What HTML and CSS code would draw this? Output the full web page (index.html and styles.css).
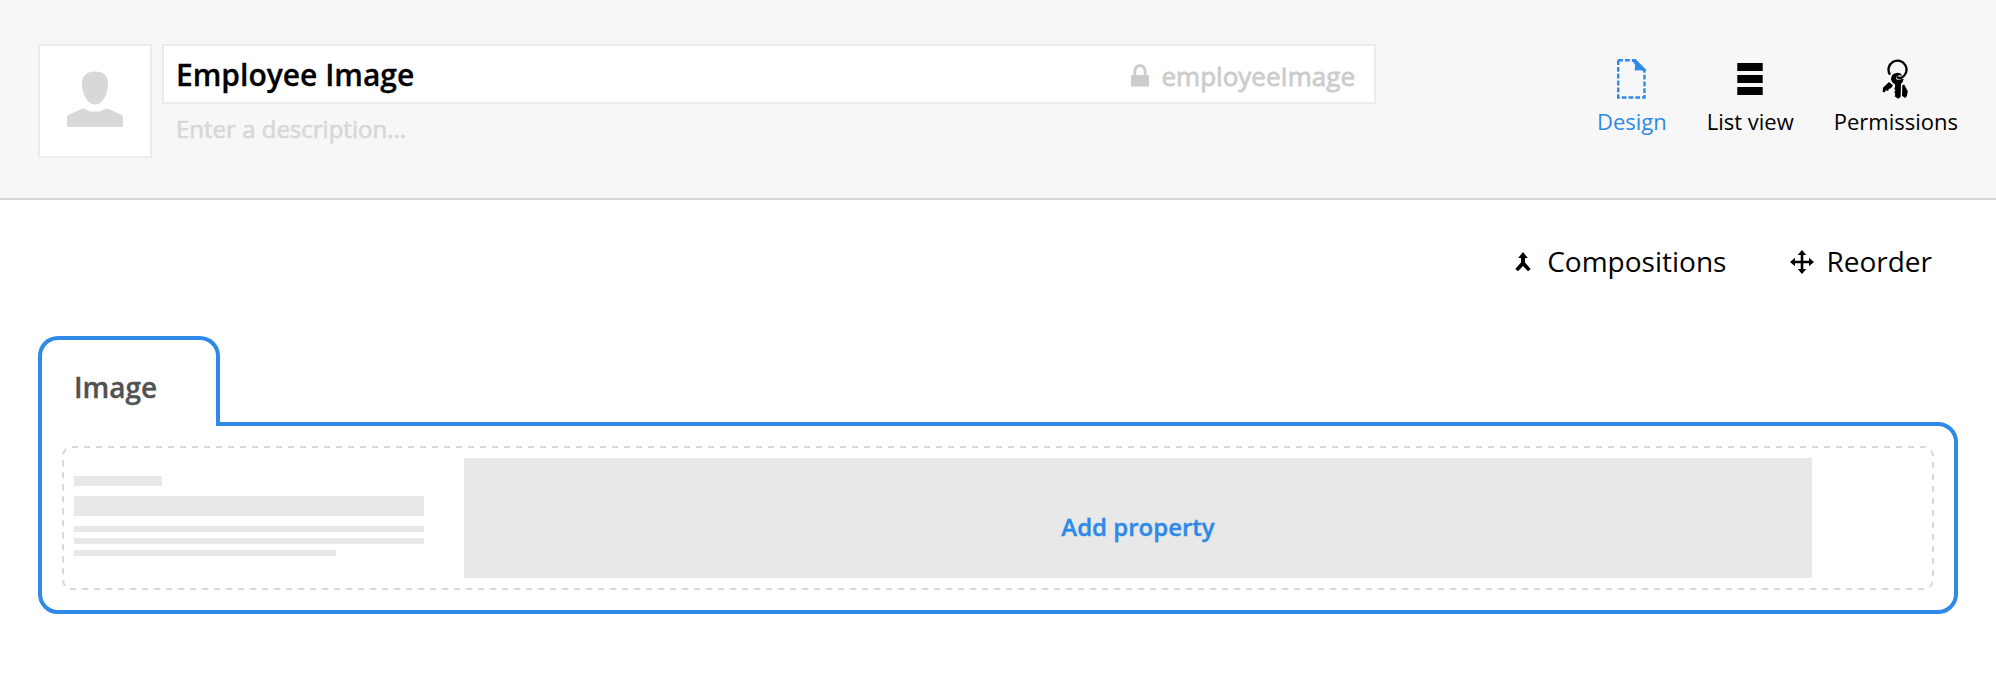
FILE: index.html
```html
<!DOCTYPE html>
<html lang="en">
<head>
<meta charset="utf-8">
<title>Employee Image</title>
<link rel="stylesheet" href="styles.css">
</head>
<body>
<header class="header">
  <div class="avatar">
    <svg width="56" height="56" viewBox="0 0 56 56"><path d="M28 0.500C36 0.500 41 4 41 13C41 22 36 33.500 28 33.500S15 22 15 13C15 4 20 0.500 28 0.500Z"/><path d="M16.500 37.500Q17.500 37.500 23 40.500H33Q38.500 37.500 39.500 37.500Q41 37.500 54 43.500Q56 44.500 56 46V54Q56 56 54 56H2Q0 56 0 54V46Q0 44.500 2 43.500Q15 37.500 16.500 37.500Z"/></svg>
  </div>
  <div class="fields">
    <div class="name-box">
      <span class="name">Employee Image</span>
      <span class="alias">
        <svg width="18" height="23" viewBox="0 0 18 23"><path d="M0 11H2.500V7C2.500 -2 15.500 -2 15.500 7V11H18V22.500H0ZM5.300 11H12.700V7.500C12.700 1.500 5.300 1.500 5.300 7.500Z" fill-rule="evenodd"/></svg>
        <span class="alias-text">employeeImage</span>
      </span>
    </div>
    <div class="description">Enter a description...</div>
  </div>
  <nav class="nav">
    <a class="nav-item active">
      <svg width="29" height="40" viewBox="0 0 29 40"><path d="M1.200 1.200H19M1.200 1.200V38.500H27.500V12" fill="none" stroke="currentColor" stroke-width="2.400" stroke-dasharray="4.800 2"/><path d="M15 0H18.500L29 10.500V12.500H27Q25 10.500 17.500 11.500Q19.500 4.500 15 2.300Z" fill="currentColor"/></svg>
      <span>Design</span>
    </a>
    <a class="nav-item">
      <svg width="26" height="40" viewBox="0 0 26 40"><path d="M0.300 4H25.700V12H0.300ZM0.300 16H25.700V24H0.300ZM0.300 28H25.700V36H0.300Z"/></svg>
      <span>List view</span>
    </a>
    <a class="nav-item">
      <svg width="28" height="40" viewBox="187 57 84 120"><path d="M211 104A27 27 0 1 1 246 113Q238 115 231 111" fill="none" stroke="#000" stroke-width="7"/><path d="M233 98Q243 98 248 107Q238 103 231 109Q226 116 232 119Q240 119 252 116Q251 126 244 131L243 171L235 176L225 169L227 163L224 157L227 151L224 146L226 141V133Q215 127 214 116Q215 100 233 98Z"/><path d="M208 126L220 136L214 145L207 147L206 153L198 151L196 157L189 156L190 143Z"/><path d="M248 135L254 134L264 154L262 168L256 174L247 167Z"/></svg>
      <span>Permissions</span>
    </a>
  </nav>
</header>
<main class="main">
  <div class="toolbar">
    <a class="tool compositions">
      <svg width="16" height="20" viewBox="0 0 16 20"><path d="M8 0L12.800 6H10V10.500L15.700 17L13 19.300L8 14L3 19.300L0.300 17L6 10.500V6H3.200Z"/></svg>
      <span>Compositions</span>
    </a>
    <a class="tool reorder">
      <svg width="24" height="24" viewBox="0 0 24 24"><path d="M12 0L16.300 5H13.300V10.700H19V7.700L24 12L19 16.300V13.300H13.300V19H16.300L12 24L7.700 19H10.700V13.300H5V16.300L0 12L5 7.700V10.700H10.700V5H7.700Z"/></svg>
      <span>Reorder</span>
    </a>
  </div>
  <div class="tab"><span>Image</span></div>
  <section class="panel">
    <div class="property">
      <svg class="outline" width="1872" height="144"><rect x="1" y="1" width="1870" height="142" rx="9"/></svg>
      <div class="skeleton">
        <div class="bar bar-label"></div>
        <div class="bar bar-title"></div>
        <div class="bar"></div>
        <div class="bar"></div>
        <div class="bar bar-short"></div>
      </div>
      <a class="add"><span>Add property</span></a>
    </div>
  </section>
</main>
</body>
</html>
```
FILE: styles.css
```css
* { box-sizing: border-box; }
body {
  margin: 0;
  height: 686px;
  background: #fff;
  color: #000;
  font-family: "Open Sans", sans-serif;
  overflow: hidden;
}
svg { display: block; flex: none; }
span { white-space: nowrap; }
.header {
  display: flex;
  height: 200px;
  padding: 44px 38px 0;
  background: #f7f7f7;
  border-bottom: 2px solid #d8d8d8;
}
.avatar {
  display: flex;
  justify-content: center;
  width: 114px;
  height: 114px;
  padding-top: 25px;
  background: #fff;
  border: 2px solid #ebebeb;
  fill: #d8d8d8;
}
.fields { width: 1214px; margin-left: 10px; }
.name-box {
  display: flex;
  align-items: center;
  justify-content: space-between;
  height: 60px;
  padding: 2px 19px 0 12px;
  background: #fff;
  border: 2px solid #ebebeb;
}
.name {
  font-size: 30px;
  font-weight: 600;
  line-height: 40px;
  -webkit-text-stroke: 0.3px currentColor;
}
.alias {
  display: flex;
  align-items: center;
  gap: 12px;
  color: #ccc;
  fill: #ccc;
  font-size: 26px;
  line-height: 36px;
}
.alias-text { padding-top: 1px; -webkit-text-stroke: 0.8px currentColor; }
.description {
  padding: 8px 0 0 14px;
  color: #d8d8d8;
  font-size: 24px;
  line-height: 34px;
  -webkit-text-stroke: 0.7px currentColor;
}
.nav {
  display: flex;
  gap: 40px;
  margin-left: auto;
  padding-top: 15px;
}
.nav-item {
  display: flex;
  flex-direction: column;
  align-items: center;
  gap: 7px;
  font-size: 22px;
  line-height: 30px;
}
.active { color: #2e8ae6; }
.main { padding: 0 38px; }
.toolbar {
  display: flex;
  justify-content: flex-end;
  gap: 64px;
  height: 136px;
  padding: 41px 26px 0 0;
  font-size: 28px;
  line-height: 40px;
}
.tool { display: flex; align-items: center; height: 40px; }
.tool svg { margin-top: 2px; }
.compositions { gap: 16px; }
.reorder { gap: 12px; }
.tab {
  position: relative;
  z-index: 1;
  width: 182px;
  height: 90px;
  margin-bottom: -4px;
  padding: 28px 0 0 32px;
  background: #fff;
  border: 4px solid #2e8ae6;
  border-bottom: 0;
  border-radius: 20px 20px 0 0;
  color: #515151;
  font-size: 28px;
  font-weight: 600;
  line-height: 38px;
  -webkit-text-stroke: 0.3px currentColor;
}
.panel {
  height: 192px;
  padding: 20px;
  border: 4px solid #2e8ae6;
  border-radius: 0 20px 20px 20px;
}
.property {
  position: relative;
  display: flex;
  gap: 40px;
  height: 144px;
  padding: 12px 122px 12px 12px;
}
.outline {
  position: absolute;
  inset: 0;
  fill: none;
  stroke: #d8d8d8;
  stroke-width: 2;
  stroke-dasharray: 6 6;
}
.skeleton {
  display: flex;
  flex-direction: column;
  gap: 6px;
  width: 350px;
  padding-top: 18px;
}
.bar { height: 6px; background: #e8e8e8; }
.bar-label { width: 88px; height: 10px; margin-bottom: 4px; }
.bar-title { height: 20px; margin-bottom: 4px; }
.bar-short { width: 262px; }
.add {
  display: flex;
  flex: 1;
  justify-content: center;
  padding-top: 52px;
  background: #e8e8e8;
  color: #2e8ae6;
  font-size: 24px;
  font-weight: 600;
  line-height: 34px;
  -webkit-text-stroke: 0.4px currentColor;
}
```
